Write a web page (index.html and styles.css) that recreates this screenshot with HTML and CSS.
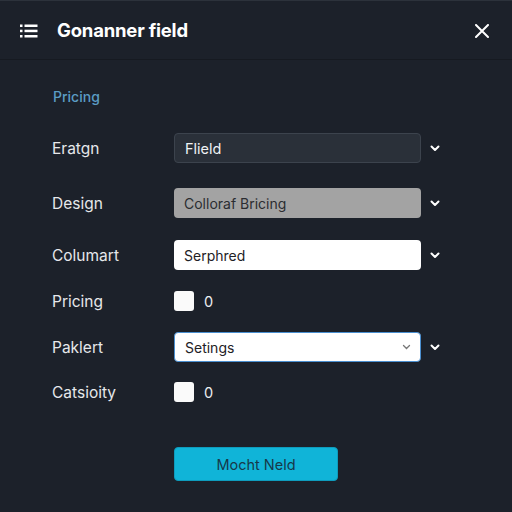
FILE: index.html
```html
<!DOCTYPE html>
<html>
<head>
<meta charset="utf-8">
<link rel="stylesheet" href="styles.css">
</head>
<body>
<div class="panel">
  <header class="header">
    <svg class="menu-icon" width="18" height="14" viewBox="0 0 18 14">
      <rect x="0" y="0.5" width="2.5" height="2.5" fill="#fff"/>
      <rect x="4.5" y="0.5" width="13" height="2.5" fill="#fff"/>
      <rect x="0" y="5.7" width="2.5" height="2.5" fill="#fff"/>
      <rect x="4.5" y="5.7" width="13" height="2.5" fill="#fff"/>
      <rect x="0" y="11" width="2.5" height="2.5" fill="#fff"/>
      <rect x="4.5" y="11" width="13" height="2.5" fill="#fff"/>
    </svg>
    <h1 class="title">Gonanner field</h1>
    <svg class="close-icon" width="14" height="14" viewBox="0 0 14 14">
      <path d="M1 1 L13 13 M13 1 L1 13" stroke="#fff" stroke-width="2" stroke-linecap="round"/>
    </svg>
  </header>
  <main class="body">
    <div class="section">Pricing</div>
    <div class="form">
      <div class="row r1">
        <span class="label">Eratgn</span>
        <div class="field dark">Flield</div>
        <svg class="chev" width="10" height="7" viewBox="0 0 10 7"><path d="M1.5 1.5 L5 5 L8.5 1.5" stroke="#fff" stroke-width="2" fill="none" stroke-linecap="round" stroke-linejoin="round"/></svg>
      </div>
      <div class="row r2">
        <span class="label">Design</span>
        <div class="field grey">Colloraf Bricing</div>
        <svg class="chev" width="10" height="7" viewBox="0 0 10 7"><path d="M1.5 1.5 L5 5 L8.5 1.5" stroke="#fff" stroke-width="2" fill="none" stroke-linecap="round" stroke-linejoin="round"/></svg>
      </div>
      <div class="row r3">
        <span class="label">Columart</span>
        <div class="field white">Serphred</div>
        <svg class="chev" width="10" height="7" viewBox="0 0 10 7"><path d="M1.5 1.5 L5 5 L8.5 1.5" stroke="#fff" stroke-width="2" fill="none" stroke-linecap="round" stroke-linejoin="round"/></svg>
      </div>
      <div class="row r4">
        <span class="label">Pricing</span>
        <div class="check-wrap"><span class="check"></span><span class="num">0</span></div>
      </div>
      <div class="row r5">
        <span class="label">Paklert</span>
        <div class="field white select">Setings
          <svg class="inner-chev" width="9" height="6" viewBox="0 0 9 6"><path d="M1.5 1.5 L4.5 4.5 L7.5 1.5" stroke="#777" stroke-width="1.3" fill="none" stroke-linecap="round"/></svg>
        </div>
        <svg class="chev" width="10" height="7" viewBox="0 0 10 7"><path d="M1.5 1.5 L5 5 L8.5 1.5" stroke="#fff" stroke-width="2" fill="none" stroke-linecap="round" stroke-linejoin="round"/></svg>
      </div>
      <div class="row r6">
        <span class="label">Catsioity</span>
        <div class="check-wrap"><span class="check"></span><span class="num">0</span></div>
      </div>
    </div>
    <div class="actions">
      <button class="btn">Mocht Neld</button>
    </div>
  </main>
</div>
</body>
</html>
```
FILE: styles.css
```css
* { box-sizing: border-box; }
html, body { margin: 0; padding: 0; }
body {
  width: 512px;
  height: 512px;
  background: #1c212a;
  font-family: Inter, "Noto Sans", sans-serif;
  color: #e8eaed;
  overflow: hidden;
}
.panel {
  width: 512px;
  height: 512px;
  border-top: 1px solid #2c323b;
  display: flex;
  flex-direction: column;
}
.header {
  height: 59px;
  border-bottom: 1px solid #161a21;
  display: flex;
  align-items: center;
  padding: 0 23px 0 20px;
}
.menu-icon { margin-top: 1px; }
.title {
  margin: 0 0 0 19px;
  font-size: 18.5px;
  font-weight: 700;
  color: #ffffff;
  flex: 1;
  letter-spacing: -0.2px;
}
.close-icon { margin-top: 1px; }
.body {
  padding: 0 0 0 52px;
  display: flex;
  flex-direction: column;
}
.section {
  margin-top: 28px;
  font-size: 14px;
  font-weight: 500;
  color: #5b9cc4;
  padding-left: 1px;
  height: 18px;
  line-height: 18px;
}
.form {
  display: flex;
  flex-direction: column;
  margin-top: 27px;
}
.row {
  display: flex;
  align-items: center;
  height: 30px;
}
.r2 { margin-top: 25px; }
.r3 { margin-top: 22px; }
.r4 { margin-top: 17px; height: 28px; }
.r5 { margin-top: 17px; }
.r6 { margin-top: 16px; height: 28px; }
.label {
  width: 122px;
  font-size: 15.5px;
  color: #e6e8eb;
}
.field {
  width: 247px;
  height: 30px;
  border-radius: 4px;
  display: flex;
  align-items: center;
  padding-left: 10px;
  font-size: 14.5px;
}
.dark {
  background: #2a3039;
  border: 1px solid #3c434d;
  color: #f0f2f4;
}
.grey {
  background: #a3a3a3;
  color: #2b2d31;
  font-size: 14px;
}
.white {
  background: #ffffff;
  color: #1e2126;
  font-size: 14px;
}
.select {
  border: 1px solid #4a8fd0;
  justify-content: space-between;
  padding-right: 9px;
}
.chev { margin-left: 9px; }
.check-wrap {
  display: flex;
  align-items: center;
}
.check {
  width: 20px;
  height: 20px;
  background: #fafafa;
  border-radius: 3px;
}
.num {
  margin-left: 10px;
  font-size: 14.5px;
  color: #eceef0;
}
.actions {
  margin-top: 41px;
  padding-left: 122px;
}
.btn {
  width: 164px;
  height: 34px;
  background: #10b4d8;
  border: 1px solid #0e9cbd;
  border-radius: 4px;
  font-family: Inter, "Noto Sans", sans-serif;
  font-size: 14.5px;
  color: #17394a;
  padding: 0;
}
```
